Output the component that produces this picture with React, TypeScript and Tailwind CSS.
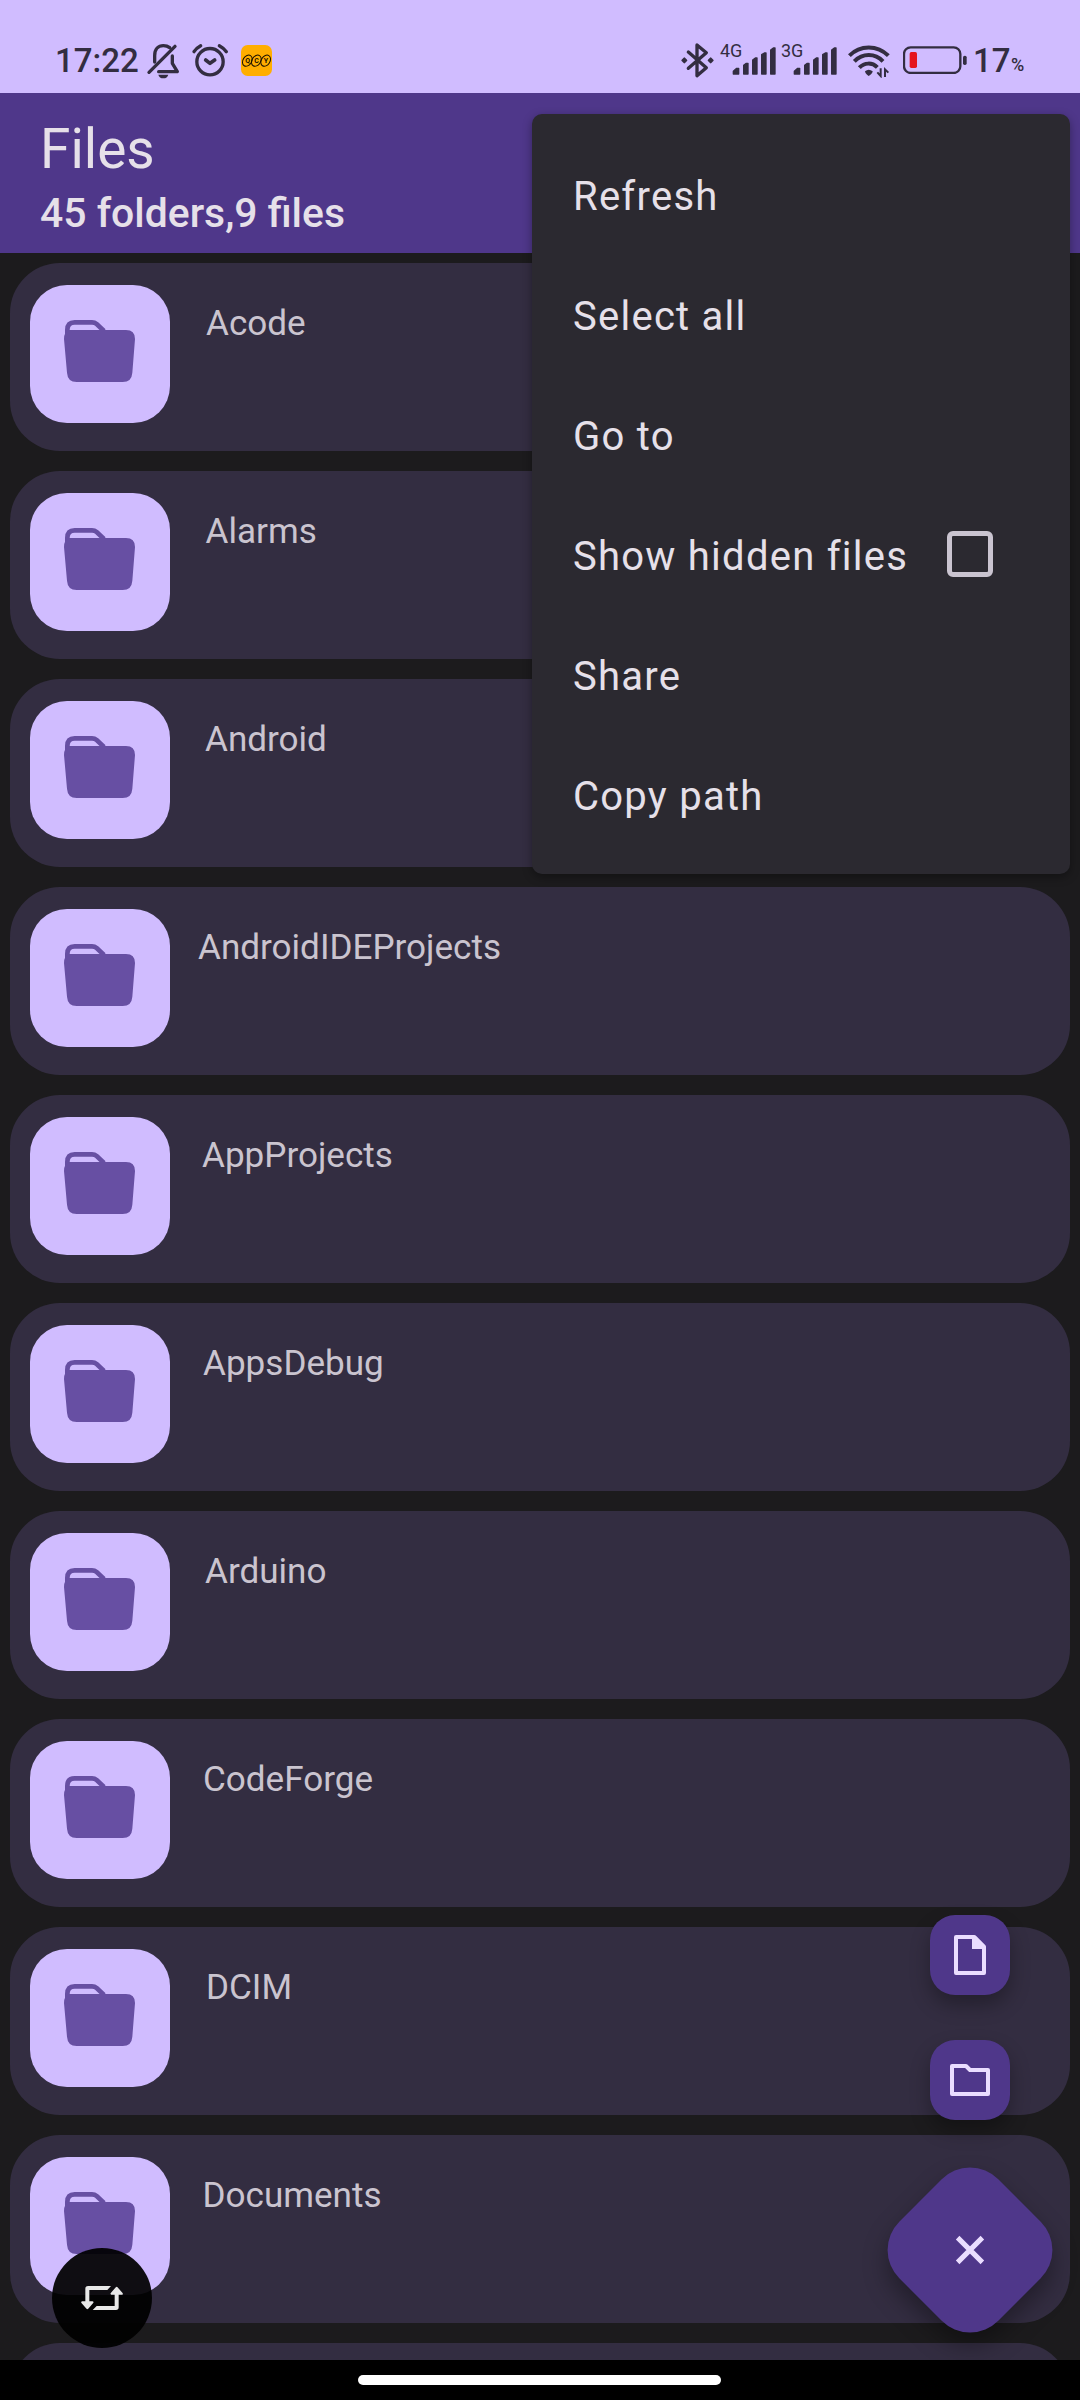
import type { ReactNode } from 'react';

const INK = '#332d41';

const folders = [
  { name: 'Acode', pad: 'ml-[36px]' },
  { name: 'Alarms', pad: 'ml-[35.500px]' },
  { name: 'Android', pad: 'ml-[35px]' },
  { name: 'AndroidIDEProjects', pad: 'ml-[28px]' },
  { name: 'AppProjects', pad: 'ml-[32px]' },
  { name: 'AppsDebug', pad: 'ml-[33px]' },
  { name: 'Arduino', pad: 'ml-[35px]' },
  { name: 'CodeForge', pad: 'ml-[33px]' },
  { name: 'DCIM', pad: 'ml-[36px]' },
  { name: 'Documents', pad: 'ml-[32.500px]' },
  { name: '', pad: '' },
];

const menuItems = ['Refresh', 'Select all', 'Go to', 'Show hidden files', 'Share', 'Copy path'];

function BellOff() {
  return (
    <svg className="ml-[3px] mt-[42px] h-[38px] w-[35px] shrink-0" viewBox="438 126 105 114" fill="none" stroke={INK} strokeWidth="10" strokeLinecap="round" strokeLinejoin="round">
      <path d="M464 186 V167 C464 147 475 137 490 137 C498 137 504 139 509 143" />
      <path d="M447 217 L525 139" />
      <path d="M517 168 V190 L532 215 H476" />
      <path d="M475 224 H505 C503 231 498 235 490 235 C482 235 477 231 475 224Z" fill={INK} stroke="none" />
    </svg>
  );
}

function Alarm() {
  return (
    <svg className="ml-[10px] mt-[42px] h-[36px] w-[38px] shrink-0" viewBox="573 126 114 108" fill="none" stroke={INK} strokeWidth="10" strokeLinecap="round" strokeLinejoin="round">
      <circle cx="630" cy="185" r="39.500" />
      <path d="M617 180 L630 190 L644 180" strokeWidth="11" />
      <path d="M582 155 Q589 144 602 137 M658 137 Q671 144 679 155" />
    </svg>
  );
}

function QcyBadge() {
  return (
    <svg className="ml-[12px] mt-[45px] h-[31px] w-[31px] shrink-0" viewBox="723 135 93 93">
      <rect x="723" y="135" width="93" height="93" rx="20" fill="#ffae00" />
      <g fill="none" stroke="#1a1000" strokeWidth="3">
        <ellipse cx="742" cy="182" rx="13" ry="18" transform="rotate(32 742 182)" />
        <ellipse cx="769" cy="182" rx="13" ry="18" transform="rotate(32 769 182)" />
        <ellipse cx="797" cy="182" rx="13" ry="18" transform="rotate(32 797 182)" />
      </g>
      <g fill="#1a1000" fontFamily="Roboto, sans-serif" fontWeight="700" fontSize="21" textAnchor="middle">
        <text x="743" y="190">Q</text>
        <text x="770" y="190">C</text>
        <text x="798" y="190">Y</text>
      </g>
    </svg>
  );
}

function Bluetooth() {
  return (
    <svg className="mt-[41px] h-[38px] w-[35px] shrink-0" viewBox="60 63 105 114" fill="none" stroke={INK} strokeWidth="10" strokeLinecap="round" strokeLinejoin="round">
      <path d="M85 96 L139 143 L111 167 V75 L139 98 L85 145" />
      <path d="M73 115 L79 121 L73 127 L67 121Z M152 115 L158 121 L152 127 L146 121Z" fill={INK} strokeWidth="6" />
    </svg>
  );
}

function Signal({ label, className }: { label: string; className: string }) {
  return (
    <div className={`flex shrink-0 ${className}`}>
      <span className="mt-[42px] w-[12px] whitespace-nowrap text-[18px] leading-[18px]">{label}</span>
      <svg className="mt-[47px] h-[28px] w-[44px] shrink-0" viewBox="216 81 132 84" fill={INK} stroke={INK} strokeWidth="4" strokeLinejoin="round">
        <path d="M220 162 V154 L230 145 H236 V162Z M251 162 V136 L259 130 H264 V162Z M278 162 V120 L286 114 H291 V162Z M305 162 V104 L313 99 H318 V162Z M332 162 V90 L340 84 H345 V162Z" />
      </svg>
    </div>
  );
}

function Wifi() {
  return (
    <svg className="ml-[11px] mt-[44px] h-[34px] w-[43px] shrink-0" viewBox="564 72 129 102" fill="none" stroke={INK} strokeWidth="12" strokeLinecap="butt">
      <path d="M568 107 C600 74 652 74 685 107" />
      <path d="M583 124 C608 99 645 99 669 124" />
      <path d="M598 143 C613 127 637 127 652 142" />
      <path d="M615 154 Q626 144 638 154 Q638 160 626 168 Q615 160 615 154Z" fill={INK} stroke="none" />
      <path d="M662 145 V168 L652 157 M675 171 V148 L685 158" strokeWidth="6" />
    </svg>
  );
}

function Battery() {
  return (
    <svg className="ml-[12px] mt-[46px] h-[28px] w-[64px] shrink-0" viewBox="729 78 192 84" fill="none">
      <rect x="732" y="82" width="169" height="77" rx="20" stroke={INK} strokeWidth="7" />
      <rect x="749" y="96" width="22" height="48" rx="5" fill="#e5141d" />
      <rect x="909" y="107" width="11" height="28" rx="5" fill={INK} />
    </svg>
  );
}

function StatusBar() {
  return (
    <div className="flex h-[93px] items-start bg-[#d0bcff] text-[#332d41]">
      <span className="ml-[55px] mt-[44px] w-[88px] whitespace-nowrap text-[33px] font-medium leading-[34px]">17:22</span>
      <BellOff />
      <Alarm />
      <QcyBadge />
      <div className="ml-[408px] flex items-start">
        <Bluetooth />
        <Signal label="4G" className="ml-[5px]" />
        <Signal label="3G" className="ml-[5px]" />
        <Wifi />
        <Battery />
        <span className="ml-[6px] mt-[44px] w-[38px] text-[33px] font-medium leading-[34px]">17</span>
        <span className="mt-[56px] text-[18px] font-medium leading-[18px]">%</span>
      </div>
    </div>
  );
}

function FolderGlyph() {
  return (
    <svg className="h-[62px] w-[71px]" viewBox="192 240 213 186" fill="#674fa3">
      <path d="M202 290 V270 Q202 247 224 247 H276 Q284 247 290 252 L312 273" fill="none" stroke="#674fa3" strokeWidth="14" />
      <path d="M208 270 H378 Q405 270 405 297 L397 398 Q395 426 368 426 H230 Q203 426 201 398 L192 297 Q192 275 208 270Z" />
    </svg>
  );
}

function FolderRow({ name, pad }: { name: string; pad: string }) {
  return (
    <div className="flex h-[188px] shrink-0 items-start rounded-[50px] bg-[#332d41] pl-[20px] pt-[22px]">
      <div className="flex h-[138px] w-[140px] shrink-0 justify-center rounded-[37px] bg-[#d0bcff] pr-[1px] pt-[35px]">
        <FolderGlyph />
      </div>
      {name && (
        <span className={`mt-[17px] whitespace-nowrap text-[35.100px] leading-[42px] text-[#cac4cf] ${pad}`}>{name}</span>
      )}
    </div>
  );
}

function Menu() {
  return (
    <div className="absolute left-[532px] top-[114px] flex h-[760px] w-[538px] flex-col rounded-[10px] bg-[#2b2930] py-[20px] pl-[41px] text-[40px] tracking-[1.250px] text-[#e6e0e9] shadow-[0_3px_10px_rgba(0,0,0,0.35)]">
      {menuItems.map((label) => (
        <div key={label} className="flex h-[120px] items-center">
          <span className="w-[374px] whitespace-nowrap pt-[5px] leading-[48px]">{label}</span>
          {label === 'Show hidden files' && <span className="h-[46px] w-[46px] rounded-[6px] border-5 border-[#cac4d0]" />}
        </div>
      ))}
    </div>
  );
}

function MiniFab({ children }: { children: ReactNode }) {
  return (
    <div className="flex h-[80px] w-[80px] items-center justify-center rounded-[25px] bg-[#4f378a] shadow-[0_10px_20px_rgba(0,0,0,0.3)]">
      {children}
    </div>
  );
}

function Fabs() {
  return (
    <div className="absolute left-[900px] top-[1915px] flex w-[140px] flex-col items-center">
      <MiniFab>
        <svg className="h-[40px] w-[32px]" viewBox="282 165 96 120" fill="none" stroke="#eaddff" strokeWidth="12" strokeLinejoin="round">
          <path d="M288 171 H343 L372 200 V279 H288Z" />
          <path d="M336 168 V207 H374 L343 171Z" fill="#eaddff" stroke="none" />
        </svg>
      </MiniFab>
      <div className="mt-[45px]">
        <MiniFab>
          <svg className="h-[32px] w-[40px]" viewBox="270 552 120 96" fill="none" stroke="#eaddff" strokeWidth="12" strokeLinejoin="round">
            <path d="M276 558 H318 L330 570 H384 V642 H276Z" />
          </svg>
        </MiniFab>
      </div>
      <div className="mt-[60px] flex h-[140px] w-[140px] rotate-45 items-center justify-center rounded-[40px] bg-[#4f378a] shadow-[9px_9px_24px_rgba(0,0,0,0.35)]">
        <svg className="h-[36px] w-[36px]" viewBox="0 0 36 36" stroke="#eaddff" strokeWidth="5">
          <path d="M18 0.500 V35.500 M0.500 18 H35.500" />
        </svg>
      </div>
    </div>
  );
}

function RotateButton() {
  return (
    <div className="absolute left-[52px] top-[2248px] flex h-[100px] w-[100px] items-center justify-center rounded-full bg-black/93">
      <svg className="h-[26px] w-[44px]" viewBox="240 465 132 78" fill="#e8e8e8">
        <path d="M256 520 V476 Q256 468 264 468 H333 L322 480 H268 V520Z" />
        <path d="M356 488 V532 Q356 540 348 540 H278 L290 528 H344 V488Z" />
        <path d="M247 517 H277 L262 534Z M335 491 H365 L350 474Z" stroke="#e8e8e8" strokeWidth="7" strokeLinejoin="round" />
      </svg>
    </div>
  );
}

export default function App() {
  return (
    <div className="relative flex h-[2400px] w-[1080px] flex-col overflow-hidden bg-[#1c1b1d] font-['Roboto',sans-serif]">
      <StatusBar />
      <header className="h-[160px] bg-[#4f378a] pl-[40px] pt-[24px] text-[#e6e0e9]">
        <h1 className="text-[55px] leading-[64px]">Files</h1>
        <p className="mt-[8px] text-[40.900px] font-medium leading-[48px]">45 folders,9 files</p>
      </header>
      <main className="flex h-[2107px] flex-col gap-[20px] overflow-hidden px-[10px] pt-[10px]">
        {folders.map((folder) => (
          <FolderRow key={folder.name} {...folder} />
        ))}
      </main>
      <nav className="flex h-[40px] shrink-0 items-start justify-center bg-black pr-[1px] pt-[15px]">
        <div className="h-[10px] w-[363px] rounded-full bg-white" />
      </nav>
      <Menu />
      <Fabs />
      <RotateButton />
    </div>
  );
}
